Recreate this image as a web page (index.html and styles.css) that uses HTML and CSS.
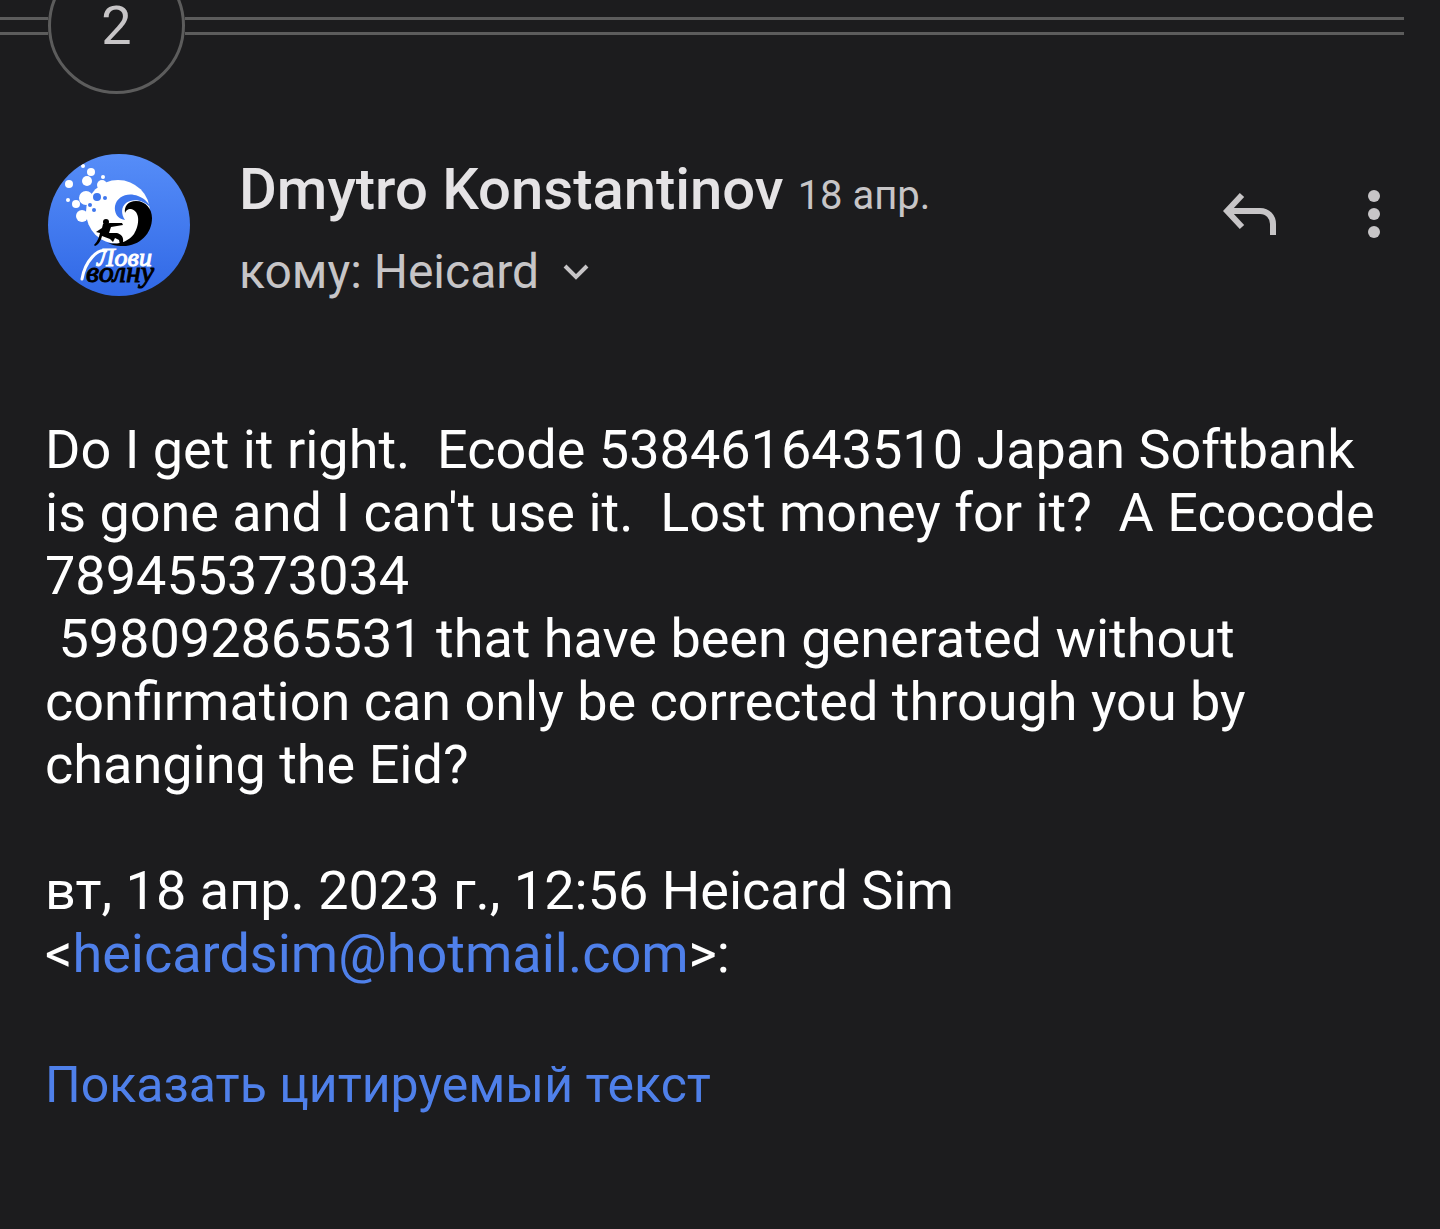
FILE: index.html
```html
<!DOCTYPE html>
<html lang="ru">
<head>
  <meta charset="UTF-8">
  <meta name="viewport" content="width=device-width, initial-scale=1.0">
  <title>Dmytro Konstantinov</title>
  <link rel="stylesheet" href="styles.css">
</head>
<body>

<div class="divider">
  <span class="line line-left"></span>
  <button type="button" class="count">2</button>
  <span class="line line-right"></span>
</div>

<main class="message">
  <header class="message-header">
    <svg class="avatar" viewBox="0 0 142 142" role="img" aria-label="Лови волну">
      <defs>
        <linearGradient id="sky" x1="0" y1="0" x2="0" y2="1">
          <stop offset="0" stop-color="#568df8"/>
          <stop offset="1" stop-color="#3068e6"/>
        </linearGradient>
        <clipPath id="round"><circle cx="71" cy="71" r="71"/></clipPath>
      </defs>
      <g clip-path="url(#round)">
        <rect width="142" height="142" fill="url(#sky)"/>
        <!-- foam -->
        <g fill="#fff">
          <circle cx="70" cy="58" r="32"/>
          <circle cx="35" cy="12" r="2"/>
          <circle cx="43" cy="18" r="4"/>
          <circle cx="39" cy="27" r="5"/>
          <circle cx="55" cy="23" r="2"/>
          <circle cx="21" cy="30" r="4"/>
          <circle cx="54" cy="31" r="5"/>
          <circle cx="38" cy="44" r="7"/>
          <circle cx="20" cy="46" r="2"/>
          <circle cx="28" cy="50" r="4"/>
          <circle cx="34" cy="62" r="6"/>
        </g>
        <g fill="#3f77ee">
          <circle cx="49" cy="43" r="4"/>
          <circle cx="57" cy="44" r="2"/>
          <circle cx="42" cy="51" r="2"/>
          <circle cx="46" cy="56" r="2"/>
          <path d="M77 66C69 65 66 58 67 52C69 42 80 38 90 42C98 45 101 50 103 54C96 46 85 44 78 49C73 53 73 60 77 66Z"/>
        </g>
        <!-- wave -->
        <path d="M77 59C76 52 80 47 88 47C98 47 104 55 104 64C104 80 91 93 73 92C68 92 64 91 60 89C70 91 80 88 86 80C92 70 92 57 83 55C79 55 78 57 77 59Z"/>
        <!-- surfer -->
        <circle cx="58" cy="68" r="3"/>
        <path d="M55 70L62 69L74 69L75 71L63 73L61 79L69 79C73 80 76 83 75 88L76 91L72 91L71 86L67 84L65 88L62 85L54 82C53 87 50 91 47 92L46 91C50 87 51 83 52 79L48 78L54 74Z"/>
        <path class="flourish" d="M58 97C50 94 37 107 34 125"/>
        <g class="logo-text">
          <text class="logo-top" x="49" y="112">Лови</text>
          <text class="logo-bottom" x="38" y="128">волну</text>
        </g>
      </g>
    </svg>

    <div class="sender">
      <div class="sender-line">
        <h1 class="name">Dmytro Konstantinov</h1>
        <time class="date" datetime="2023-04-18">18 апр.</time>
      </div>
      <button type="button" class="recipient">
        кому: Heicard
        <svg class="chevron" viewBox="0 0 26 16" aria-hidden="true"><path d="M2 2L13 13L24 2"/></svg>
      </button>
    </div>

    <div class="actions">
      <button type="button" class="icon-button" aria-label="Ответить">
        <svg class="reply" viewBox="0 0 54 44" aria-hidden="true"><path d="M19 3L4 19L19 35M4 19H37C45 19 50 25 50 32V43"/></svg>
      </button>
      <button type="button" class="icon-button" aria-label="Ещё">
        <svg class="more" viewBox="0 0 14 50" aria-hidden="true">
          <circle cx="7" cy="7" r="6"/>
          <circle cx="7" cy="25" r="6"/>
          <circle cx="7" cy="43" r="6"/>
        </svg>
      </button>
    </div>
  </header>

  <div class="message-body">
    <p>Do I get it right.  Ecode 538461643510 Japan Softbank is gone and I can't use it.  Lost money for it?  A Ecocode 789455373034<br> 598092865531 that have been generated without confirmation can only be corrected through you by changing the Eid?</p>
    <p>вт, 18 апр. 2023 г., 12:56 Heicard Sim &lt;<a href="mailto:heicardsim@hotmail.com">heicardsim@hotmail.com</a>&gt;:</p>
  </div>

  <button type="button" class="show-quoted">Показать цитируемый текст</button>
</main>

</body>
</html>
```
FILE: styles.css
```css
/* Basic Page Styling */
* {
  box-sizing: border-box;
}

body {
  margin: 0;
  background-color: #1c1c1e;
  color: #fff;
  font-family: Roboto, sans-serif;
}

button {
  padding: 0;
  border: none;
  background: none;
  color: #c7c5c7;
  font-family: inherit;
  cursor: pointer;
}

svg {
  display: block;
  flex-shrink: 0;
}

/* Collapsed messages divider */
.divider {
  display: flex;
  align-items: center;
  margin-top: -43px;
  padding-right: 36px;
}

.line {
  height: 18px;
  border-top: 3px solid #5c5c5c;
  border-bottom: 3px solid #5c5c5c;
}

.line-left {
  width: 48px;
}

.line-right {
  flex: 1;
}

.count {
  width: 137px;
  height: 137px;
  border: 3px solid #5c5c5c;
  border-radius: 50%;
  font-size: 54px;
}

/* Message */
.message {
  padding: 60px 45px;
}

.message-header {
  display: flex;
  padding-left: 3px;
}

.avatar {
  width: 142px;
  height: 142px;
}

.logo-text {
  font-family: "Liberation Serif", serif;
  font-style: italic;
}

.logo-top {
  fill: #fff;
  stroke: #fff;
  font-size: 26px;
}

.logo-bottom {
  fill: #000;
  stroke: #000;
  font-size: 30px;
}

.flourish {
  fill: none;
  stroke: #fff;
  stroke-width: 3;
  stroke-linecap: round;
}

.sender {
  flex: 1;
  margin-left: 49px;
}

.sender-line {
  display: flex;
  align-items: baseline;
  gap: 14px;
}

.name {
  margin: 0;
  color: #e5e3e5;
  font-size: 58px;
  font-weight: 500;
  line-height: 70px;
}

.date {
  color: #c7c5c7;
  font-size: 40px;
}

.recipient {
  display: flex;
  align-items: center;
  gap: 24px;
  margin-top: 18px;
  font-size: 48px;
  line-height: 60px;
}

.chevron {
  width: 26px;
  height: 16px;
  fill: none;
  stroke: #c7c5c7;
  stroke-width: 4;
}

.actions {
  display: flex;
  align-items: center;
  gap: 90px;
  height: 120px;
  padding-right: 14px;
}

.reply {
  width: 54px;
  height: 44px;
  fill: none;
  stroke: #c7c5c7;
  stroke-width: 6;
}

.more {
  width: 14px;
  height: 50px;
  fill: #c7c5c7;
}

.message-body {
  margin-top: 116px;
  font-size: 54px;
  line-height: 63px;
}

.message-body p {
  margin: 0 0 63px;
  white-space: pre-wrap;
}

.message-body a {
  color: #4f80ea;
  text-decoration: none;
}

.show-quoted {
  color: #4f80ea;
  font-size: 50px;
  line-height: 74px;
}
```
